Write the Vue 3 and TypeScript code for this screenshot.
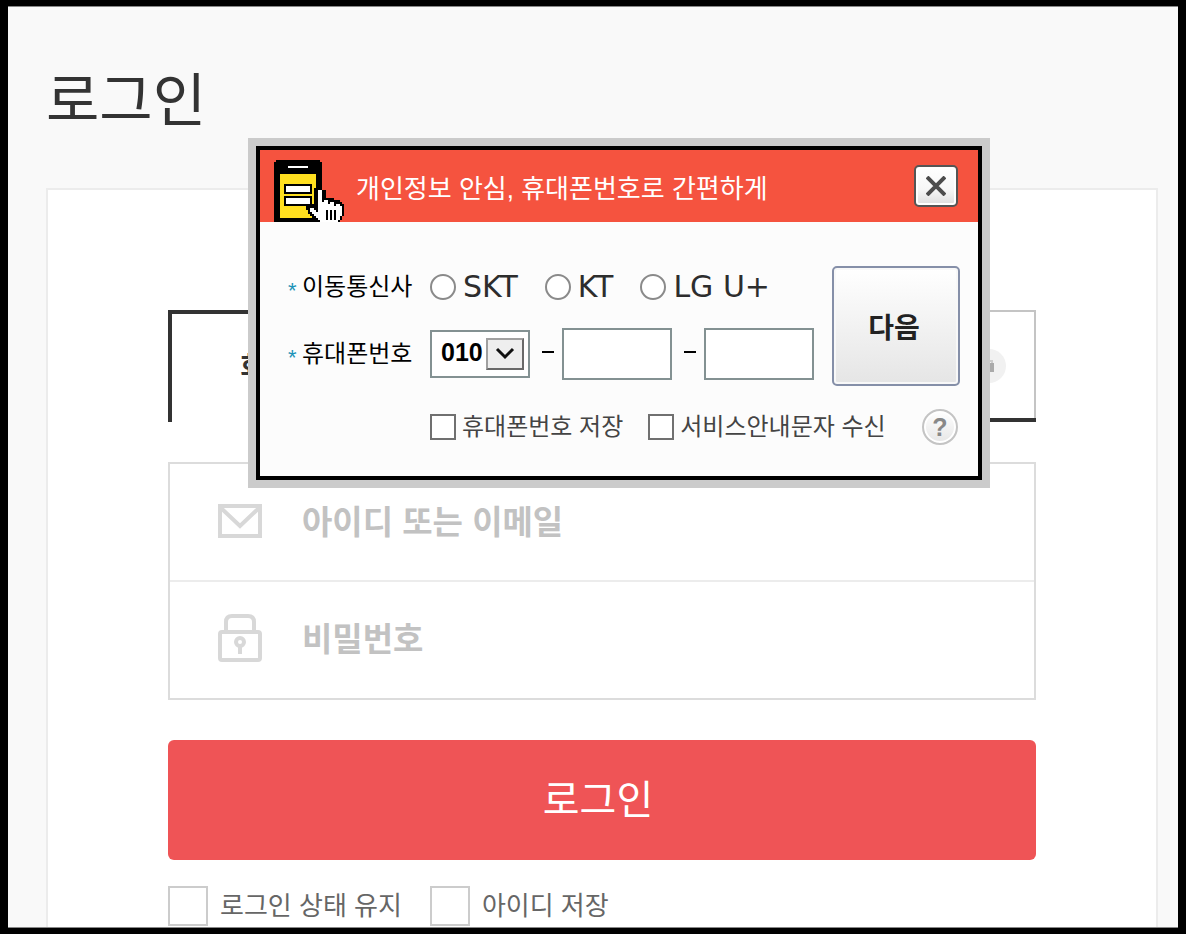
<script setup lang="ts">
import { ref } from 'vue'

interface Option {
  id: string
  label: string
}

const carriers: Option[] = [
  { id: 'skt', label: 'SKT' },
  { id: 'kt', label: 'KT' },
  { id: 'lgu', label: 'LG U+' },
]

const consents: Option[] = [
  { id: 'save-phone', label: '휴대폰번호 저장' },
  { id: 'sms', label: '서비스안내문자 수신' },
]

const loginOptions: Option[] = [
  { id: 'keep', label: '로그인 상태 유지' },
  { id: 'save-id', label: '아이디 저장' },
]

const carrier = ref<string>('')
const prefix = ref<string>('010')
const middle = ref<string>('')
const last = ref<string>('')
const userId = ref<string>('')
const password = ref<string>('')
const checked = ref<string[]>([])
const open = ref<boolean>(true)
</script>

<template>
  <div class="frame">
    <main class="page">
      <h1 class="title">로그인</h1>

      <form class="card" @submit.prevent>
        <div class="tabs">
          <button type="button" class="tab active">회원</button>
          <button type="button" class="tab other" aria-label="휴대폰">
            <span class="badge">
              <svg viewBox="0 0 10 12" width="10" height="12" aria-hidden="true">
                <path d="M2 5V1h6v4" fill="none" stroke="#ccc" stroke-width="2" />
                <path d="M0 3h10v9H0z" fill="#aaa" />
              </svg>
            </span>
          </button>
        </div>

        <div class="credentials">
          <label class="field">
            <svg viewBox="0 0 44 34" width="44" height="34" aria-hidden="true">
              <path d="M2 2h40v30H2z" fill="none" stroke="#d8d8d8" stroke-width="4" />
              <path d="M3 4l19 18L41 4" fill="none" stroke="#d8d8d8" stroke-width="4" />
            </svg>
            <input v-model="userId" type="text" placeholder="아이디 또는 이메일" aria-label="아이디 또는 이메일" />
          </label>
          <label class="field">
            <svg viewBox="0 0 44 48" width="44" height="48" aria-hidden="true">
              <path d="M8 18V8q0-6 6-6h16q6 0 6 6v10" fill="none" stroke="#d8d8d8" stroke-width="4" />
              <rect x="2" y="18" width="40" height="28" rx="2" fill="none" stroke="#d8d8d8" stroke-width="4" />
              <circle cx="22" cy="28" r="4" fill="none" stroke="#d8d8d8" stroke-width="4" />
              <path d="M22 31v9" stroke="#d8d8d8" stroke-width="4" />
            </svg>
            <input v-model="password" type="password" placeholder="비밀번호" aria-label="비밀번호" />
          </label>
        </div>

        <button type="submit" class="submit">로그인</button>

        <div class="login-options">
          <label v-for="o in loginOptions" :key="o.id" class="login-option">
            <input v-model="checked" type="checkbox" :value="o.id" />
            <span>{{ o.label }}</span>
          </label>
        </div>
      </form>

      <section v-if="open" class="dialog" role="dialog" aria-labelledby="dialog-title">
        <div class="dialog-inner">
          <header class="dialog-head">
            <svg class="phone" viewBox="0 0 35 31" width="70" height="62" shape-rendering="crispEdges" aria-hidden="true">
              <path d="M1 0h22v1h1v30H0V1h1z" fill="#000" />
              <path d="M7 3h10v1H7z" fill="#fff" />
              <path d="M3 7h18v22H3z" fill="#ffdf1f" />
              <path d="M5 12h14v5H5zM5 18h14v5H5z" fill="#000" />
              <path d="M6 13h12v3H6zM6 19h12v3H6z" fill="#fff" />
              <path
                d="M22 14h2v1h2v4h4v1h3v1h1v1h1v6h-1v2h-1v1H21v-1h-1v-1h-1v-1h-1v-1h-1v-2h-1v-3h4v-8h2z"
                fill="#000"
              />
              <path
                d="M22 15h2v6h1v-1h2v2h1v-1h2v2h1v-1h2v1h1v5h-1v2h-1v1H23v-1h-1v-1h-1v-1h-1v-1h-1v-1h-1v-2h2v1h1v1h1z"
                fill="#fff"
              />
              <path d="M26 25h1v5h-1zM28 25h1v5h-1zM30 25h1v5h-1z" fill="#000" />
            </svg>
            <h2 id="dialog-title">개인정보 안심, 휴대폰번호로 간편하게</h2>
            <button type="button" class="close" aria-label="닫기" @click="open = false">
              <svg viewBox="0 0 20 20" width="20" height="20" aria-hidden="true">
                <path d="M1 1l18 18M19 1L1 19" stroke="#4c4c4c" stroke-width="4" />
              </svg>
            </button>
          </header>

          <form class="dialog-body" @submit.prevent>
            <div class="phone-form">
              <span id="carrier-label" class="caption"><i>*</i>이동통신사</span>
              <div class="carriers" role="radiogroup" aria-labelledby="carrier-label">
                <label v-for="c in carriers" :key="c.id" class="carrier">
                  <input v-model="carrier" type="radio" name="carrier" :value="c.id" />
                  <span>{{ c.label }}</span>
                </label>
              </div>
              <label for="prefix" class="caption second"><i>*</i>휴대폰번호</label>
              <div class="number">
                <span class="prefix">
                  <select id="prefix" v-model="prefix">
                    <option>010</option>
                  </select>
                  <span class="arrow">
                    <svg viewBox="0 0 20 14" width="20" height="14" aria-hidden="true">
                      <path d="M2 2l8 8 8-8" fill="none" stroke="#111" stroke-width="3" />
                    </svg>
                  </span>
                </span>
                <span class="dash"></span>
                <input v-model="middle" type="text" maxlength="4" aria-label="휴대폰번호 가운데 자리" />
                <span class="dash"></span>
                <input v-model="last" type="text" maxlength="4" aria-label="휴대폰번호 끝자리" />
              </div>
              <button type="submit" class="next">다음</button>
            </div>

            <div class="consents">
              <label v-for="c in consents" :key="c.id" class="consent">
                <input v-model="checked" type="checkbox" :value="c.id" />
                <span>{{ c.label }}</span>
              </label>
              <button type="button" class="help">?</button>
            </div>
          </form>
        </div>
      </section>
    </main>
  </div>
</template>

<style>
html,
body {
  background: #000;
}
</style>

<style scoped>
* {
  box-sizing: border-box;
}

.frame {
  height: 100vh;
  padding: 6px 8px;
  overflow: hidden;
  background: #000;
  font-family: "Liberation Sans", "Noto Sans CJK KR", sans-serif;
}

button,
input,
select {
  margin: 0;
  padding: 0;
  border-radius: 0;
  font-family: inherit;
}

input,
select {
  appearance: none;
  background: #fff;
}

.page {
  position: relative;
  height: 100%;
  padding: 45px 20px 0 38px;
  overflow: hidden;
  border-top: 1px solid #888;
  border-bottom: 1px solid #888;
  background: #f9f9f9;
}

.title {
  margin: 0 0 48px;
  font-family: "Noto Sans CJK KR", sans-serif;
  font-size: 58px;
  font-weight: 400;
  line-height: 88px;
  color: #333;
}

.card {
  display: flex;
  flex-direction: column;
  min-height: 800px;
  padding: 120px;
  border: 2px solid #ececec;
  background: #fff;
}

.tabs {
  display: grid;
  grid-template-columns: 1fr 1fr;
  height: 112px;
  margin-bottom: 40px;
}

.tab {
  display: flex;
  align-items: center;
  border: 0;
  background: #fff;
  color: #333;
  font-size: 28px;
  font-weight: 700;
}

.tab.active {
  padding: 0 0 6px 68px;
  border-top: 4px solid #333;
  border-left: 4px solid #333;
}

.tab.other {
  justify-content: flex-end;
  padding: 4px 30px 0 0;
  border-bottom: 4px solid #333;
  box-shadow: inset -2px 2px #c4c4c4;
}

.badge {
  display: flex;
  align-items: center;
  justify-content: center;
  width: 34px;
  height: 34px;
  border-radius: 50%;
  background: #f1f1f1;
}

.credentials {
  margin-bottom: 40px;
  border: 2px solid #dcdcdc;
}

.field {
  display: flex;
  align-items: center;
  gap: 40px;
  height: 116px;
  padding: 0 0 2px 48px;
}

.field + .field {
  height: 118px;
  padding-bottom: 4px;
  border-top: 2px solid #ececec;
}

.field input {
  flex: 1;
  min-width: 0;
  height: 60px;
  padding-top: 4px;
  border: 0;
  outline: 0;
  font-size: 33px;
  font-weight: 700;
}

.field input::placeholder {
  color: #c2c2c2;
  opacity: 1;
}

.submit {
  height: 120px;
  margin-bottom: 26px;
  padding: 0 8px 6px 0;
  border: 0;
  border-radius: 6px;
  background: #ef5456;
  color: #fff;
  font-size: 40px;
}

.login-options {
  display: flex;
  gap: 28px;
}

.login-option {
  display: flex;
  align-items: center;
  gap: 12px;
  height: 40px;
  color: #666;
  font-size: 26px;
}

.login-option span {
  padding-bottom: 6px;
}

.login-option input {
  width: 40px;
  height: 40px;
  border: 2px solid #ccc;
}

.dialog {
  position: absolute;
  top: 131px;
  left: 240px;
  width: 742px;
  padding: 8px;
  background: #cbcbcb;
}

.dialog-inner {
  border: 4px solid #000;
  background: #fcfcfc;
}

.dialog-head {
  display: flex;
  align-items: center;
  gap: 12px;
  height: 72px;
  padding: 0 20px 0 14px;
  background: #f5533f;
}

.phone {
  align-self: flex-end;
}

.dialog-head h2 {
  flex: 1;
  margin: 0;
  padding-top: 6px;
  color: #fff;
  font-size: 26px;
  font-weight: 400;
  line-height: 40px;
}

.close {
  display: flex;
  align-items: center;
  justify-content: center;
  width: 44px;
  height: 42px;
  border: 2px solid #555;
  border-radius: 5px;
  background: linear-gradient(#fff, #f6f6f6 60%, #ddd);
  box-shadow: inset 0 0 0 2px #fff;
}

.dialog-body {
  display: flex;
  flex-direction: column;
  gap: 23px;
  padding: 44px 18px 31px 28px;
}

.phone-form {
  display: grid;
  grid-template-columns: 142px 1fr 128px;
  grid-template-rows: 42px 58px;
  row-gap: 20px;
}

.caption {
  display: flex;
  align-items: center;
  color: #000;
  font-size: 24px;
  line-height: 36px;
}

.caption i {
  width: 14px;
  padding-top: 8px;
  color: #1c93b8;
  font-size: 22px;
  font-style: normal;
  line-height: 24px;
}

.caption.second,
.number {
  height: 52px;
}

.carriers {
  display: flex;
  align-items: center;
  gap: 27px;
}

.carrier {
  display: flex;
  align-items: center;
  gap: 7px;
  color: #2d2d2d;
  font-family: "DejaVu Sans", sans-serif;
  font-size: 30px;
  line-height: 36px;
  white-space: nowrap;
}

.carrier input {
  width: 26px;
  height: 26px;
  border: 2px solid #8a8a8a;
  border-radius: 50%;
}

.carrier input:checked {
  background: radial-gradient(#333 40%, #fff 45%);
}

.number {
  display: flex;
  align-items: center;
}

.number > input {
  width: 110px;
  height: 52px;
  padding: 0 8px;
  border: 2px solid #839192;
  font-size: 24px;
}

.prefix {
  position: relative;
  width: 100px;
  height: 48px;
}

.prefix select {
  width: 100%;
  height: 100%;
  padding: 0 44px 4px 9px;
  border: 2px solid #839192;
  color: #000;
  font-size: 25px;
  font-weight: 700;
}

.arrow {
  position: absolute;
  top: 8px;
  right: 6px;
  display: flex;
  align-items: center;
  justify-content: center;
  width: 38px;
  height: 32px;
  border: 2px solid;
  border-color: #a0a0a0 #696969 #696969 #a0a0a0;
  background: #eee;
  pointer-events: none;
}

.dash {
  width: 12px;
  height: 2px;
  margin: 0 8px 4px 12px;
  background: #000;
}

.next {
  grid-row: 1 / 3;
  grid-column: 3;
  padding-right: 4px;
  border: 2px solid #858fa8;
  border-radius: 5px;
  background: linear-gradient(#fff, #e5e5e5);
  box-shadow: inset 0 0 0 2px #f8f8f8;
  color: #222;
  font-size: 28px;
  font-weight: 700;
}

.consents {
  display: flex;
  align-items: center;
  gap: 25px;
  padding: 0 2px 0 142px;
}

.consent {
  display: flex;
  align-items: center;
  gap: 6px;
  color: #444;
  font-size: 24px;
  line-height: 36px;
  white-space: nowrap;
}

.consent input {
  width: 26px;
  height: 26px;
  border: 2px solid #707070;
}

.login-option input:checked,
.consent input:checked {
  background: #666;
  box-shadow: inset 0 0 0 4px #fff;
}

.help {
  width: 36px;
  height: 36px;
  margin-left: auto;
  border: 2px solid #c4c4c4;
  border-radius: 50%;
  background: linear-gradient(#fff, #e6e6e6);
  box-shadow: inset 0 0 0 2px #fff;
  color: #888;
  font-size: 25px;
  font-weight: 700;
  line-height: 30px;
}
</style>
